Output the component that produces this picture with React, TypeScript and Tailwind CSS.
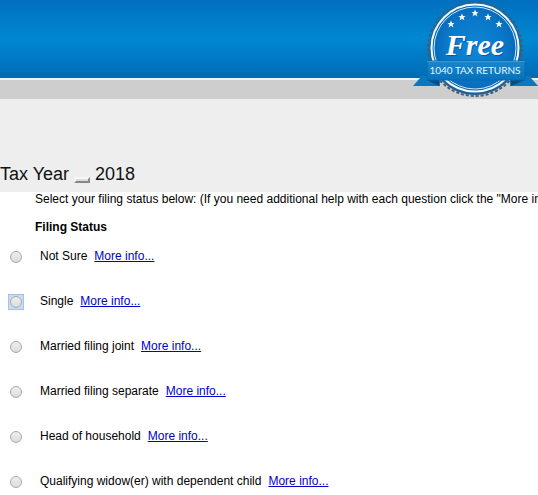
const statuses = [
  { id: "not-sure", label: "Not Sure" },
  { id: "single", label: "Single", focused: true },
  { id: "joint", label: "Married filing joint" },
  { id: "separate", label: "Married filing separate" },
  { id: "head", label: "Head of household" },
  { id: "widow", label: "Qualifying widow(er) with dependent child" },
];

const stars = [
  [451, 24],
  [462, 17],
  [475, 13],
  [488, 17],
  [499, 24],
];

function FreeBadge() {
  return (
    <svg
      className="absolute top-0 right-0"
      width="126"
      height="100"
      viewBox="412 0 126 100"
      role="img"
      aria-label="Free 1040 tax returns"
    >
      <defs>
        <radialGradient id="disc" cx="0.5" cy="0.5" r="0.55">
          <stop offset="0" stopColor="#0f86d8" />
          <stop offset="0.6" stopColor="#0a78c9" />
          <stop offset="1" stopColor="#0564b1" />
        </radialGradient>
        <linearGradient id="ribbon" x1="0" y1="0" x2="0" y2="1">
          <stop offset="0" stopColor="#1a86ca" />
          <stop offset="1" stopColor="#0672bd" />
        </linearGradient>
      </defs>
      <path d="M419 76H440V86H413L420 78Z M510 76H531V78L538 86H510Z" fill="#0878c2" />
      <circle cx="475" cy="49" r="46" fill="#2a5f8c" />
      <circle cx="475" cy="49" r="47" fill="none" stroke="#3d5f7c" strokeWidth="2" strokeDasharray="3 2" />
      <circle cx="475" cy="48" r="45" fill="#0a70bd" />
      <circle cx="475" cy="48" r="43.5" fill="url(#disc)" stroke="#f4faff" strokeWidth="2" />
      <circle cx="475" cy="48" r="41" fill="none" stroke="#cfe7f8" strokeWidth="1" />
      {stars.map(([x, y]) => (
        <path
          key={x}
          transform={`translate(${x} ${y}) scale(0.35)`}
          d="M0-10 3-3 10-3 4.500 2 7 10 0 5-7 10-4.500 2-10-3-3-3Z"
          fill="#f3faff"
        />
      ))}
      <text
        x="476"
        y="56"
        textAnchor="middle"
        className="font-['Liberation_Serif',serif] text-[30px] font-bold italic"
        fill="#075c9f"
        aria-hidden="true"
      >
        Free
      </text>
      <text
        x="475"
        y="55"
        textAnchor="middle"
        className="font-['Liberation_Serif',serif] text-[30px] font-bold italic"
        fill="#fff"
      >
        Free
      </text>
      <path d="M427 80H439V86Z M525 80H511V86Z" fill="#074c80" />
      <rect x="427" y="61" width="98" height="19" fill="url(#ribbon)" stroke="#0868aa" strokeWidth="1" />
      <path d="M427 61.500H525" stroke="#349bd7" />
      <text
        x="475"
        y="74"
        textAnchor="middle"
        className="font-[Lato,sans-serif] text-[10px]"
        fill="#e5f5ff"
      >
        1040 TAX RETURNS
      </text>
    </svg>
  );
}

export default function App() {
  return (
    <div className="min-h-screen overflow-hidden bg-white font-['Liberation_Sans',Arial,sans-serif] text-xs leading-4 text-black">
      <header className="relative">
        <div className="h-20 border-b-2 border-[#e8f5fc] bg-linear-to-b from-[#006fbe] via-[#0088d2] to-[#006bb6]" />
        <div className="h-[19px] bg-[#cecece]" />
        <FreeBadge />
      </header>
      <div className="bg-[#eee] pt-[65px] pb-2">
        <h1 className="flex items-end gap-[5px] text-lg leading-5 text-[#111]">
          <span>Tax Year</span>
          <button
            type="button"
            aria-label="Change tax year"
            className="mb-px h-[6px] w-4 border-2 border-t-[#f8f8f8] border-r-[#888] border-b-[#888] border-l-[#f8f8f8] bg-[#ddd]"
          />
          <span>2018</span>
        </h1>
      </div>
      <form>
        <p className="overflow-hidden pl-[35px] leading-[14px] whitespace-nowrap">
          Select your filing status below: (If you need additional help with each question click the "More info..." link)
        </p>
        <fieldset className="pt-[13px]">
          <legend className="float-left w-full pl-[35px] font-bold">Filing Status</legend>
          <div className="clear-both flex flex-col gap-[29px] pt-[13px]">
            {statuses.map(({ id, label, focused }) => (
              <div key={id} className="flex h-4 items-center">
                <span className="flex w-10 shrink-0 pt-[2px] pl-[9px]">
                  <span
                    className={
                      "flex size-[14px] items-center justify-center " +
                      (focused ? "bg-[#c9dbf6] outline outline-[#a3c0ee]" : "")
                    }
                  >
                    <input
                      type="radio"
                      id={id}
                      name="filing-status"
                      className="size-3 appearance-none rounded-full border border-[#aaa] bg-linear-to-b from-[#eee] to-[#dcdcdc] checked:bg-[#555]"
                    />
                  </span>
                </span>
                <label htmlFor={id} className="whitespace-nowrap">
                  {label}
                </label>
                <a href="#info" className="ml-[7px] whitespace-nowrap text-[#0000cc] underline">
                  More info...
                </a>
              </div>
            ))}
          </div>
        </fieldset>
      </form>
    </div>
  );
}
